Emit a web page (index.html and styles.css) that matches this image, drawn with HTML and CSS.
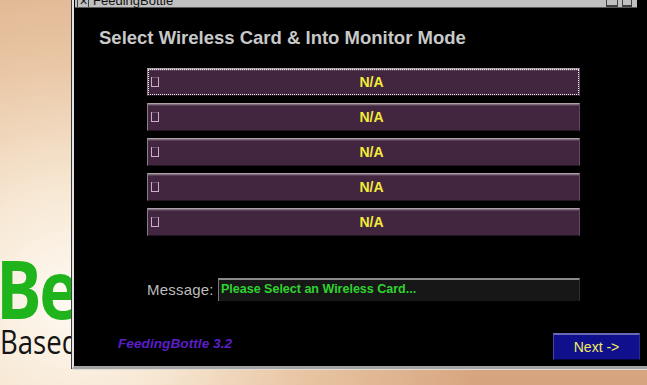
FILE: index.html
```html
<!DOCTYPE html>
<html>
<head>
  <title>FeedingBottle</title>
  <link rel="stylesheet" href="styles.css">
</head>
<body>

  <div class="logo">
    <div class="logo-big">Be</div>
    <div class="logo-small">Based</div>
  </div>

  <div class="window">
    <div class="titlebar">
      <span class="close-box">&#x2715;</span>
      <span class="title-text">FeedingBottle</span>
      <span class="spacer"></span>
      <span class="tb-btn"></span>
      <span class="tb-btn small"></span>
    </div>

    <div class="content">
      <h2>Select Wireless Card &amp; Into Monitor Mode</h2>

      <div class="cards">
        <div class="card focused"><span class="check"></span><span class="card-label">N/A</span></div>
        <div class="card"><span class="check"></span><span class="card-label">N/A</span></div>
        <div class="card"><span class="check"></span><span class="card-label">N/A</span></div>
        <div class="card"><span class="check"></span><span class="card-label">N/A</span></div>
        <div class="card"><span class="check"></span><span class="card-label">N/A</span></div>
      </div>

      <div class="message-row">
        <label>Message:</label>
        <div class="message">Please Select an Wireless Card...</div>
      </div>

      <div class="footer">
        <span class="version">FeedingBottle 3.2</span>
        <button class="next">Next -&gt;</button>
      </div>
    </div>
  </div>

</body>
</html>
```

FILE: styles.css
```css
body {
  margin: 0;
  width: 647px;
  height: 385px;
  overflow: hidden;
  position: relative;
  font-family: "Liberation Sans", Arial, sans-serif;
  background: radial-gradient(circle at 70px 300px, #fffaf3 0, #f7e8d4 110px, #e9c6a4 240px, #d6a47e 420px);
}

/* desktop wallpaper text */
.logo {
  position: absolute;
  left: 0;
  top: 252px;
  font-family: "Open Sans", sans-serif;
}

.logo-big {
  font-size: 81px;
  font-weight: 700;
  line-height: 72px;
  color: #1fb31c;
  letter-spacing: -3px;
  margin-left: -4px;
  transform: scaleX(0.84);
  transform-origin: left;
}

.logo-small {
  font-size: 32px;
  line-height: 32px;
  color: #141414;
  margin-top: 2px;
  transform: scaleX(0.86);
  transform-origin: left;
}

/* the application window */
.window {
  position: absolute;
  left: 72px;
  top: -11px;
  width: 590px;
  height: 380px;
  box-sizing: border-box;
  background-color: #000;
  border-left: 2px solid #e4e4e4;
  border-bottom: 3px solid #a4a4a4;
  box-shadow: -1px 0 0 #3c3c3c, 0 1px 0 #e0dcd8;
}

.titlebar {
  height: 18px;
  margin-left: 1px;
  margin-right: 25px;
  background-color: #c0c0c0;
  border-bottom: 1px solid #5a5a5a;
  display: flex;
  align-items: flex-end;
}

.close-box {
  width: 12px;
  height: 16px;
  margin-left: 2px;
  border: 1px solid #404040;
  border-bottom: none;
  font-size: 11px;
  line-height: 18px;
  text-align: center;
  color: #202020;
  box-sizing: border-box;
}

.title-text {
  font-size: 13px;
  line-height: 16px;
  color: #101010;
  margin-left: 4px;
  margin-bottom: -2px;
}

.spacer {
  flex: 1;
}

.tb-btn {
  width: 12px;
  height: 14px;
  border: 1px solid #404040;
  border-bottom: 2px solid #404040;
  box-sizing: border-box;
  margin-right: 4px;
}

.tb-btn.small {
  width: 10px;
  margin-right: 5px;
}

.content {
  padding-left: 25px;
}

h2 {
  margin: 20px 0 0;
  font-size: 18.5px;
  line-height: 20px;
  font-weight: bold;
  color: #c8c8c8;
}

.cards {
  margin: 20px 0 0 48px;
  width: 433px;
  display: flex;
  flex-direction: column;
  gap: 7px;
}

.card {
  height: 28px;
  box-sizing: border-box;
  display: flex;
  align-items: center;
  background-color: #42263f;
  border-top: 1px solid #ada0ab;
  border-left: 1px solid #8c7a8a;
  border-right: 1px solid #5e4a5c;
  border-bottom: 1px solid #241422;
  box-shadow: inset 0 1px 0 #7d6a7b, inset 0 2px 0 #584156;
}

.card.focused {
  outline: 1px dotted #f4f4f4;
  outline-offset: -2px;
}

.check {
  width: 6px;
  height: 9px;
  margin-left: 3px;
  margin-right: 5px;
  border: 1px solid #c9b0c8;
  border-top: none;
  box-shadow: inset 0 1px 0 #6d566b;
}

.card-label {
  flex: 1;
  text-align: center;
  font-size: 14px;
  font-weight: bold;
  color: #f3eb3a;
}

.message-row {
  margin: 42px 0 0 48px;
  display: flex;
  align-items: center;
}

.message-row label {
  width: 71px;
  font-size: 15px;
  color: #bcbcbc;
  letter-spacing: 0.2px;
}

.message {
  width: 362px;
  height: 23px;
  box-sizing: border-box;
  padding: 2px 0 0 2px;
  background-color: #171717;
  border-top: 2px solid #8a8a8a;
  border-left: 1px solid #7a7a7a;
  border-right: 1px solid #303030;
  font-size: 12.5px;
  font-weight: bold;
  color: #2ed32e;
}

.footer {
  margin: 32px 0 0 19px;
  width: 522px;
  display: flex;
  justify-content: space-between;
  align-items: flex-start;
}

.version {
  margin-top: 3px;
  font-size: 13.7px;
  font-weight: bold;
  font-style: italic;
  color: #5a1fc6;
}

.next {
  width: 87px;
  height: 27px;
  padding: 0;
  background-color: #11108c;
  border: none;
  border-top: 2px solid #6a6ab4;
  border-left: 1px solid #4848a8;
  border-bottom: 1px solid #06063e;
  border-right: 1px solid #2a2a90;
  font-family: "Liberation Sans", Arial, sans-serif;
  font-size: 14px;
  color: #f2ee5c;
}
```
